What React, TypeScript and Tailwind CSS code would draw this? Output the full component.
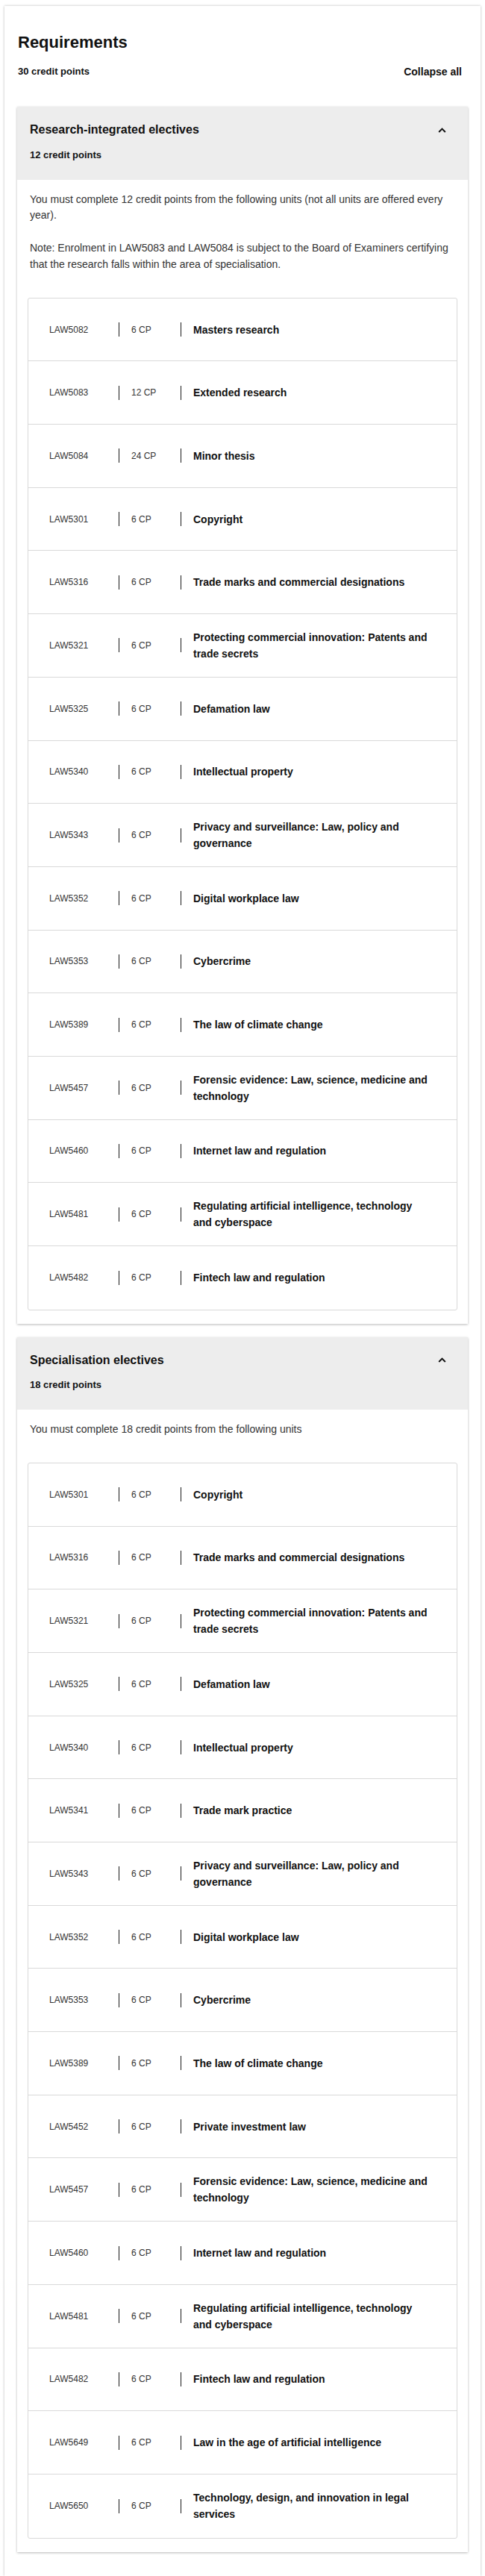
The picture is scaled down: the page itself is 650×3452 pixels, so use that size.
type Unit = { code: string; cp: string; title: string }

const researchUnits: Unit[] = [
  { code: 'LAW5082', cp: '6 CP', title: 'Masters research' },
  { code: 'LAW5083', cp: '12 CP', title: 'Extended research' },
  { code: 'LAW5084', cp: '24 CP', title: 'Minor thesis' },
  { code: 'LAW5301', cp: '6 CP', title: 'Copyright' },
  { code: 'LAW5316', cp: '6 CP', title: 'Trade marks and commercial designations' },
  { code: 'LAW5321', cp: '6 CP', title: 'Protecting commercial innovation: Patents and trade secrets' },
  { code: 'LAW5325', cp: '6 CP', title: 'Defamation law' },
  { code: 'LAW5340', cp: '6 CP', title: 'Intellectual property' },
  { code: 'LAW5343', cp: '6 CP', title: 'Privacy and surveillance: Law, policy and governance' },
  { code: 'LAW5352', cp: '6 CP', title: 'Digital workplace law' },
  { code: 'LAW5353', cp: '6 CP', title: 'Cybercrime' },
  { code: 'LAW5389', cp: '6 CP', title: 'The law of climate change' },
  { code: 'LAW5457', cp: '6 CP', title: 'Forensic evidence: Law, science, medicine and technology' },
  { code: 'LAW5460', cp: '6 CP', title: 'Internet law and regulation' },
  { code: 'LAW5481', cp: '6 CP', title: 'Regulating artificial intelligence, technology and cyberspace' },
  { code: 'LAW5482', cp: '6 CP', title: 'Fintech law and regulation' },
]

const specialisationUnits: Unit[] = [
  { code: 'LAW5301', cp: '6 CP', title: 'Copyright' },
  { code: 'LAW5316', cp: '6 CP', title: 'Trade marks and commercial designations' },
  { code: 'LAW5321', cp: '6 CP', title: 'Protecting commercial innovation: Patents and trade secrets' },
  { code: 'LAW5325', cp: '6 CP', title: 'Defamation law' },
  { code: 'LAW5340', cp: '6 CP', title: 'Intellectual property' },
  { code: 'LAW5341', cp: '6 CP', title: 'Trade mark practice' },
  { code: 'LAW5343', cp: '6 CP', title: 'Privacy and surveillance: Law, policy and governance' },
  { code: 'LAW5352', cp: '6 CP', title: 'Digital workplace law' },
  { code: 'LAW5353', cp: '6 CP', title: 'Cybercrime' },
  { code: 'LAW5389', cp: '6 CP', title: 'The law of climate change' },
  { code: 'LAW5452', cp: '6 CP', title: 'Private investment law' },
  { code: 'LAW5457', cp: '6 CP', title: 'Forensic evidence: Law, science, medicine and technology' },
  { code: 'LAW5460', cp: '6 CP', title: 'Internet law and regulation' },
  { code: 'LAW5481', cp: '6 CP', title: 'Regulating artificial intelligence, technology and cyberspace' },
  { code: 'LAW5482', cp: '6 CP', title: 'Fintech law and regulation' },
  { code: 'LAW5649', cp: '6 CP', title: 'Law in the age of artificial intelligence' },
  { code: 'LAW5650', cp: '6 CP', title: 'Technology, design, and innovation in legal services' },
]

function ChevronUp() {
  return (
    <svg width="11" height="7" viewBox="0 0 11 7" fill="none" aria-hidden="true">
      <path d="M1.2 6 L5.5 1.6 L9.8 6" stroke="#111" strokeWidth="2" />
    </svg>
  )
}

function UnitRow({ unit }: { unit: Unit }) {
  return (
    <li className="flex h-[84.7px] items-center pl-[28px] pr-[36px]">
      <span className="w-[93px] shrink-0 text-[12px] leading-[18px] text-[#333]">{unit.code}</span>
      <span className="h-[19px] w-px shrink-0 bg-[#1a1a1a]" />
      <span className="w-[82px] shrink-0 pl-[16px] text-[12px] leading-[18px] text-[#333]">{unit.cp}</span>
      <span className="h-[19px] w-px shrink-0 bg-[#1a1a1a]" />
      <span className="flex-1 pl-[16px] text-[14px] font-bold leading-[22px] text-[#111]">{unit.title}</span>
    </li>
  )
}

function Section({
  title,
  credits,
  children,
  units,
}: {
  title: string
  credits: string
  children: React.ReactNode
  units: Unit[]
}) {
  return (
    <section className="bg-white shadow-[0_1px_3px_rgba(0,0,0,0.28)]">
      <div className="bg-[#ededed] pl-[17px] pr-[29px] pt-[19px] pb-[23px]">
        <div className="flex items-center justify-between">
          <h2 className="text-[16px] font-bold leading-[24px] text-[#111]">{title}</h2>
          <ChevronUp />
        </div>
        <p className="mt-[11.5px] text-[13px] font-bold leading-[20px] text-[#111]">{credits}</p>
      </div>
      <div className="px-[14px] pt-[16px] pb-[18px]">
        <div className="px-[3px] text-[14px] leading-[21.7px] text-[#333]">{children}</div>
        <ul className="mt-[33px] divide-y divide-[#d9d9d9] rounded-[3px] border border-[#d9d9d9]">
          {units.map((u) => (
            <UnitRow key={u.code} unit={u} />
          ))}
        </ul>
      </div>
    </section>
  )
}

export default function App() {
  return (
    <div className="min-h-[3452px] bg-white px-[6px] pt-[8px] font-['Liberation_Sans',Arial,sans-serif]">
      <div className="bg-white px-[17px] pt-[35px] pb-[32px] shadow-[0_0_3px_rgba(0,0,0,0.28)]">
        <h1 className="pl-px text-[22px] font-bold leading-[28px] text-[#111]">Requirements</h1>
        <div className="mt-[15px] flex items-center justify-between pl-px pr-[8px]">
          <p className="text-[13px] font-bold leading-[20px] text-[#111]">30 credit points</p>
          <button type="button" className="text-[14px] font-bold leading-[20px] text-[#111]">
            Collapse all
          </button>
        </div>

        <div className="mt-[37px] flex flex-col gap-[18px]">
          <Section title="Research-integrated electives" credits="12 credit points" units={researchUnits}>
            <p>You must complete 12 credit points from the following units (not all units are offered every year).</p>
            <p className="mt-[22.4px]">
              Note: Enrolment in LAW5083 and LAW5084 is subject to the Board of Examiners certifying that the research
              falls within the area of specialisation.
            </p>
          </Section>
          <Section title="Specialisation electives" credits="18 credit points" units={specialisationUnits}>
            <p>You must complete 18 credit points from the following units</p>
          </Section>
        </div>
      </div>
    </div>
  )
}
